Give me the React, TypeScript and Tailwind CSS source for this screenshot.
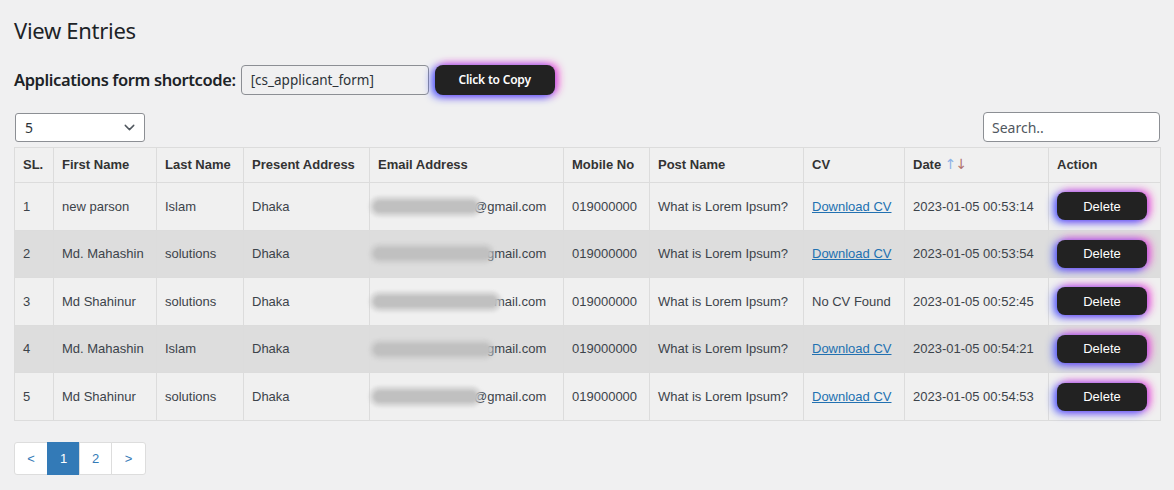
import { ChevronDown } from "lucide-react"

const rows = [
    { sl: 1, first: "new parson", last: "Islam", addr: "Dhaka", blob: 105, email: "@gmail.com", mobile: "019000000", post: "What is Lorem Ipsum?", cv: true, date: "2023-01-05 00:53:14" },
    { sl: 2, first: "Md. Mahashin", last: "solutions", addr: "Dhaka", blob: 118, email: "gmail.com", mobile: "019000000", post: "What is Lorem Ipsum?", cv: true, date: "2023-01-05 00:53:54" },
    { sl: 3, first: "Md Shahinur", last: "solutions", addr: "Dhaka", blob: 125, email: "mail.com", mobile: "019000000", post: "What is Lorem Ipsum?", cv: false, date: "2023-01-05 00:52:45" },
    { sl: 4, first: "Md. Mahashin", last: "Islam", addr: "Dhaka", blob: 118, email: "gmail.com", mobile: "019000000", post: "What is Lorem Ipsum?", cv: true, date: "2023-01-05 00:54:21" },
    { sl: 5, first: "Md Shahinur", last: "solutions", addr: "Dhaka", blob: 105, email: "@gmail.com", mobile: "019000000", post: "What is Lorem Ipsum?", cv: true, date: "2023-01-05 00:54:53" },
]

const glow = "shadow-[-3px_2px_8px_rgba(60,80,255,0.95),3px_-1px_8px_rgba(250,60,210,0.95)]"

export default function App() {
    return (
        <div className="min-h-[490px] bg-[#f0f0f1] px-[14px] pt-[16px] text-[#3c434a] font-['Liberation_Sans',Arial,sans-serif]">
            <h1 className="text-[22px] leading-[28px] tracking-[-0.3px] text-[#1d2327] font-['Noto_Sans',sans-serif] font-normal">View Entries</h1>

            <div className="mt-[21px] flex items-center h-[30px]">
                <span className="text-[16.5px] font-semibold text-[#1d2327] font-['Noto_Sans',sans-serif] tracking-[-0.4px]">Applications form shortcode:</span>
                <input
                    readOnly
                    value="[cs_applicant_form]"
                    className="ml-[5px] w-[188px] h-[30px] px-[9px] bg-[#f0f0f1] border border-[#8c8f94] rounded-[4px] text-[13.5px] text-[#2c3338] font-['Noto_Sans',sans-serif] focus:outline-none"
                />
                <button className={`ml-[6px] w-[120px] h-[30px] rounded-[8px] bg-[#222] text-white text-[12px] font-semibold tracking-[-0.2px] font-['Noto_Sans',sans-serif] ${glow}`}>
                    Click to Copy
                </button>
            </div>

            <div className="mt-[17px] flex items-end justify-between">
                <div className="ml-px w-[130px] h-[29px] bg-white border border-[#8c8f94] rounded-[3px] flex items-center justify-between pl-[9px] pr-[6px] text-[14px] text-[#2c3338] font-['Noto_Sans',sans-serif]">
                    <span>5</span>
                    <ChevronDown size={17} strokeWidth={2} className="text-[#50575e]" />
                </div>
                <input
                    placeholder="Search.."
                    className="w-[177px] h-[30px] px-[8px] bg-white border border-[#8c8f94] rounded-[4px] text-[14px] placeholder:text-[#50575e] font-['Noto_Sans',sans-serif] focus:outline-none"
                />
            </div>

            <table className="mt-[5px] w-[1146px] table-fixed border-collapse text-[13px]">
                <colgroup>
                    <col className="w-[39px]" />
                    <col className="w-[103px]" />
                    <col className="w-[87px]" />
                    <col className="w-[126px]" />
                    <col className="w-[194px]" />
                    <col className="w-[86px]" />
                    <col className="w-[154px]" />
                    <col className="w-[101px]" />
                    <col className="w-[144px]" />
                    <col className="w-[112px]" />
                </colgroup>
                <thead>
                    <tr className="h-[35px] bg-[#f0f0f0] text-left text-[#333]">
                        {["SL.", "First Name", "Last Name", "Present Address", "Email Address", "Mobile No", "Post Name", "CV"].map(h => (
                            <th key={h} className="border border-[#dcdcdc] px-[8px] font-bold whitespace-nowrap">{h}</th>
                        ))}
                        <th className="border border-[#dcdcdc] px-[8px] font-bold whitespace-nowrap">
                            Date <span className="font-normal leading-none font-['DejaVu_Sans',sans-serif] text-[14px] text-[#8fb3e6]">↑</span><span className="font-normal leading-none -ml-px font-['DejaVu_Sans',sans-serif] text-[14px] text-[#b0736e]">↓</span>
                        </th>
                        <th className="border border-[#dcdcdc] px-[8px] font-bold">Action</th>
                    </tr>
                </thead>
                <tbody>
                    {rows.map((r, i) => (
                        <tr key={r.sl} className={`h-[47.6px] ${i % 2 === 1 ? "bg-[#dddddd]" : "bg-[#f0f0f0]"}`}>
                            <td className="border border-[#dcdcdc] px-[8px]">{r.sl}</td>
                            <td className="border border-[#dcdcdc] px-[8px] whitespace-nowrap">{r.first}</td>
                            <td className="border border-[#dcdcdc] px-[8px]">{r.last}</td>
                            <td className="border border-[#dcdcdc] px-[8px]">{r.addr}</td>
                            <td className="border border-[#dcdcdc] px-[8px]">
                                <div className="flex items-center">
                                    <span
                                        className="block shrink-0 h-[13px] -ml-[5px] -mr-[4px] rounded-full bg-[#c0c0c0] blur-[1.5px] shadow-[0_0_0_4px_rgba(200,200,200,0.55)]"
                                        style={{ width: r.blob }}
                                    />
                                    <span className="whitespace-nowrap">{r.email}</span>
                                </div>
                            </td>
                            <td className="border border-[#dcdcdc] px-[8px]">{r.mobile}</td>
                            <td className="border border-[#dcdcdc] px-[8px] whitespace-nowrap">{r.post}</td>
                            <td className="border border-[#dcdcdc] px-[8px] whitespace-nowrap">
                                {r.cv ? <a href="#" className="text-[#2271b1] underline">Download CV</a> : "No CV Found"}
                            </td>
                            <td className="border border-[#dcdcdc] px-[8px] whitespace-nowrap">{r.date}</td>
                            <td className="border border-[#dcdcdc] px-[8px]">
                                <button className={`w-[90px] h-[28px] rounded-[8px] bg-[#222] text-white text-[13px] ${glow}`}>Delete</button>
                            </td>
                        </tr>
                    ))}
                </tbody>
            </table>

            <div className="mt-[21px] flex h-[33px] text-[13px] text-[#337ab7] font-['Liberation_Sans',Arial,sans-serif]">
                <span className="w-[34px] flex items-center justify-center bg-white border border-[#dddddd] rounded-l-[3px]">&lt;</span>
                <span className="w-[33px] flex items-center justify-center bg-[#337ab7] text-white border border-[#337ab7] -ml-px">1</span>
                <span className="w-[33px] flex items-center justify-center bg-white border border-[#dddddd] -ml-px">2</span>
                <span className="w-[35px] flex items-center justify-center bg-white border border-[#dddddd] -ml-px rounded-r-[3px]">&gt;</span>
            </div>
        </div>
    )
}
